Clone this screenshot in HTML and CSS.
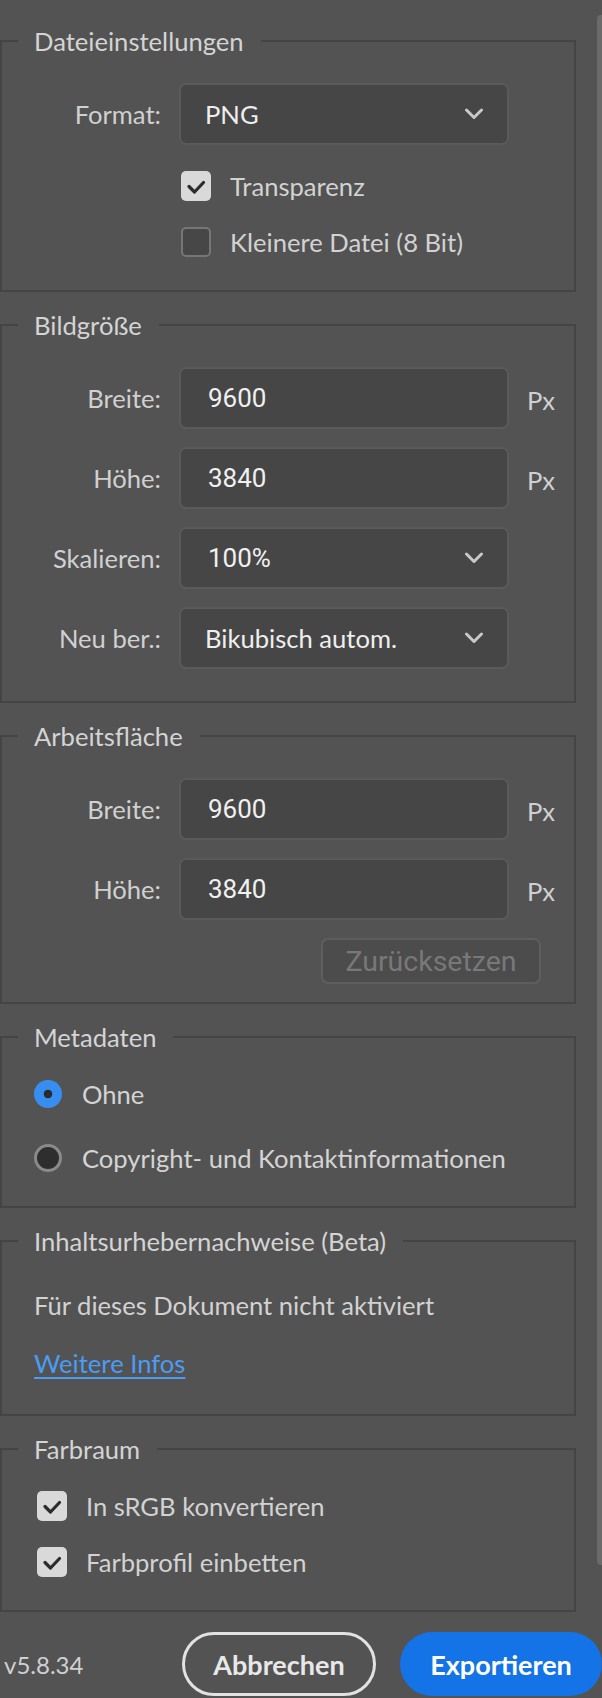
FILE: index.html
```html
<!DOCTYPE html>
<html lang="de">
<head>
<meta charset="utf-8">
<title>Exportieren</title>
<link rel="stylesheet" href="styles.css">
</head>
<body>
<div class="panel">
  <div class="scroll">
    <fieldset class="group g-file">
      <legend>Dateieinstellungen</legend>
      <div class="form loose">
        <span class="lbl">Format:</span>
        <div class="field select"><span class="val">PNG</span><svg class="chev" width="20" height="12" viewBox="0 0 20 12"><polyline points="2.5,2 10,9.5 17.5,2"/></svg></div>
        <span></span>
        <label class="check in-grid"><span class="cb on"><svg width="30" height="30" viewBox="0 0 30 30"><polyline points="8,15.5 13.5,21 22.5,11.5"/></svg></span><span>Transparenz</span></label>
        <label class="check in-grid"><span class="cb"></span><span>Kleinere Datei (8 Bit)</span></label>
      </div>
    </fieldset>

    <fieldset class="group g-size">
      <legend>Bildgröße</legend>
      <div class="form">
        <span class="lbl">Breite:</span>
        <div class="field input"><span class="num">9600</span></div>
        <span class="unit">Px</span>
        <span class="lbl">Höhe:</span>
        <div class="field input"><span class="num">3840</span></div>
        <span class="unit">Px</span>
        <span class="lbl">Skalieren:</span>
        <div class="field select"><span class="num">100%</span><svg class="chev" width="20" height="12" viewBox="0 0 20 12"><polyline points="2.5,2 10,9.5 17.5,2"/></svg></div>
        <span></span>
        <span class="lbl">Neu ber.:</span>
        <div class="field select"><span class="val">Bikubisch autom.</span><svg class="chev" width="20" height="12" viewBox="0 0 20 12"><polyline points="2.5,2 10,9.5 17.5,2"/></svg></div>
        <span></span>
      </div>
    </fieldset>

    <fieldset class="group g-canvas">
      <legend>Arbeitsfläche</legend>
      <div class="form">
        <span class="lbl">Breite:</span>
        <div class="field input"><span class="num">9600</span></div>
        <span class="unit">Px</span>
        <span class="lbl">Höhe:</span>
        <div class="field input"><span class="num">3840</span></div>
        <span class="unit">Px</span>
        <button class="reset" disabled>Zurücksetzen</button>
      </div>
    </fieldset>

    <fieldset class="group g-meta">
      <legend>Metadaten</legend>
      <div class="stack radios">
        <label class="opt"><span class="radio on"></span><span>Ohne</span></label>
        <label class="opt"><span class="radio"></span><span>Copyright- und Kontaktinformationen</span></label>
      </div>
    </fieldset>

    <fieldset class="group g-cred">
      <legend>Inhaltsurhebernachweise (Beta)</legend>
      <div class="stack texts">
        <p class="note">Für dieses Dokument nicht aktiviert</p>
        <a class="link" href="#">Weitere Infos</a>
      </div>
    </fieldset>

    <fieldset class="group g-color">
      <legend>Farbraum</legend>
      <div class="stack checks">
        <label class="check"><span class="cb on"><svg width="30" height="30" viewBox="0 0 30 30"><polyline points="8,15.5 13.5,21 22.5,11.5"/></svg></span><span>In sRGB konvertieren</span></label>
        <label class="check"><span class="cb on"><svg width="30" height="30" viewBox="0 0 30 30"><polyline points="8,15.5 13.5,21 22.5,11.5"/></svg></span><span>Farbprofil einbetten</span></label>
      </div>
    </fieldset>
  </div>

  <footer class="footer">
    <span class="version">v5.8.34</span>
    <div class="actions">
      <button class="btn btn-secondary">Abbrechen</button>
      <button class="btn btn-primary">Exportieren</button>
    </div>
  </footer>

  <div class="scrollbar"></div>
</div>
</body>
</html>
```

FILE: styles.css
```css
html, body {
  margin: 0;
  padding: 0;
  background: #535353;
  overflow: hidden;
}

body {
  font-family: "Lato", "Open Sans", sans-serif;
  font-size: 25.6px;
  color: #d2d2d2;
}

.panel {
  position: relative;
  width: 602px;
  height: 1698px;
}

.scroll {
  width: 576px;
  padding-top: 26px;
  display: flex;
  flex-direction: column;
  gap: 18px;
}

.group {
  margin: 0;
  border: 2px solid #444444;
  padding: 27px 0 33px 16px;
  min-inline-size: 0;
}

.group legend {
  padding: 0 17px 0 16px;
  font-size: 25.6px;
  line-height: 30px;
  color: #d4d4d4;
}

.g-size { padding-bottom: 32px; }
.g-canvas { padding-bottom: 18px; }
.g-cred { padding-top: 34px; padding-bottom: 36px; }

.form {
  display: grid;
  grid-template-columns: 143px 330px 46px;
  column-gap: 18px;
  row-gap: 18px;
  align-items: center;
}

.form.loose { row-gap: 26px; }

.lbl {
  text-align: right;
  color: #d0d0d0;
  line-height: 30px;
}

.field {
  box-sizing: border-box;
  height: 62px;
  background: #464646;
  border: 2px solid #5a5a5a;
  border-radius: 7px;
  display: flex;
  align-items: center;
  justify-content: space-between;
  padding: 0 23px 0 24px;
  color: #eeeeee;
}

.field .val { line-height: 30px; }

.num {
  font-family: "Roboto", sans-serif;
  font-size: 26px;
  padding-left: 3px;
  color: #f0f0f0;
}

.chev polyline {
  fill: none;
  stroke: #c9c9c9;
  stroke-width: 3;
  stroke-linecap: round;
  stroke-linejoin: round;
}

.unit {
  color: #d0d0d0;
  padding-top: 4px;
}

.check {
  display: flex;
  align-items: center;
  gap: 19px;
  height: 30px;
  color: #d2d2d2;
}

.check.in-grid {
  grid-column: 2 / 4;
  margin-left: 2px;
}

.cb {
  box-sizing: border-box;
  width: 30px;
  height: 30px;
  flex: none;
  border-radius: 5px;
  background: #474747;
  border: 2px solid #767676;
}

.cb.on {
  background: #d9d9d9;
  border: none;
}

.cb svg {
  display: block;
}

.cb polyline {
  fill: none;
  stroke: #2c2c2c;
  stroke-width: 3.2;
  stroke-linecap: round;
  stroke-linejoin: round;
}

.reset {
  grid-column: 2 / 4;
  justify-self: start;
  margin-left: 142px;
  box-sizing: border-box;
  width: 220px;
  height: 46px;
  background: #4c4c4c;
  border: 2px solid #5e5e5e;
  border-radius: 7px;
  font-family: "Roboto", sans-serif;
  font-size: 28.5px;
  color: #787878;
  padding: 0;
}

.stack {
  display: flex;
  flex-direction: column;
}

.radios {
  padding-left: 16px;
  gap: 34px;
}

.opt {
  display: flex;
  align-items: center;
  gap: 20px;
  height: 30px;
  color: #d4d4d4;
}

.radio {
  box-sizing: border-box;
  width: 28px;
  height: 28px;
  flex: none;
  border-radius: 50%;
  background: #2e2e2e;
  border: 3px solid #8a8a8a;
}

.radio.on {
  border: none;
  background: radial-gradient(circle, #2b2b2b 0 4px, #378ef0 4.6px);
}

.texts {
  padding-left: 16px;
  gap: 28px;
  align-items: flex-start;
}

.note {
  margin: 0;
  line-height: 30px;
  color: #d2d2d2;
}

.link {
  line-height: 30px;
  color: #4b9cf4;
  text-decoration: underline;
  text-underline-offset: 4px;
  text-decoration-thickness: 2px;
}

.checks {
  padding-left: 19px;
  gap: 26px;
}

.footer {
  margin-top: 20px;
  height: 64px;
  display: flex;
  align-items: center;
  justify-content: space-between;
}

.version {
  padding-left: 4px;
  font-size: 24px;
  color: #d0d0d0;
}

.actions {
  display: flex;
  gap: 24px;
  height: 64px;
}

.btn {
  box-sizing: border-box;
  height: 64px;
  border-radius: 32px;
  font-family: "Lato", sans-serif;
  font-weight: 700;
  font-size: 27px;
  padding: 0;
}

.btn-secondary {
  width: 194px;
  background: transparent;
  border: 3px solid #e2e2e2;
  color: #e8e8e8;
}

.btn-primary {
  width: 202px;
  background: #1473e6;
  border: none;
  color: #ffffff;
}

.scrollbar {
  position: absolute;
  left: 597px;
  top: 15px;
  width: 8px;
  height: 1550px;
  border-radius: 4px;
  background: #6a6a6a;
}
```
